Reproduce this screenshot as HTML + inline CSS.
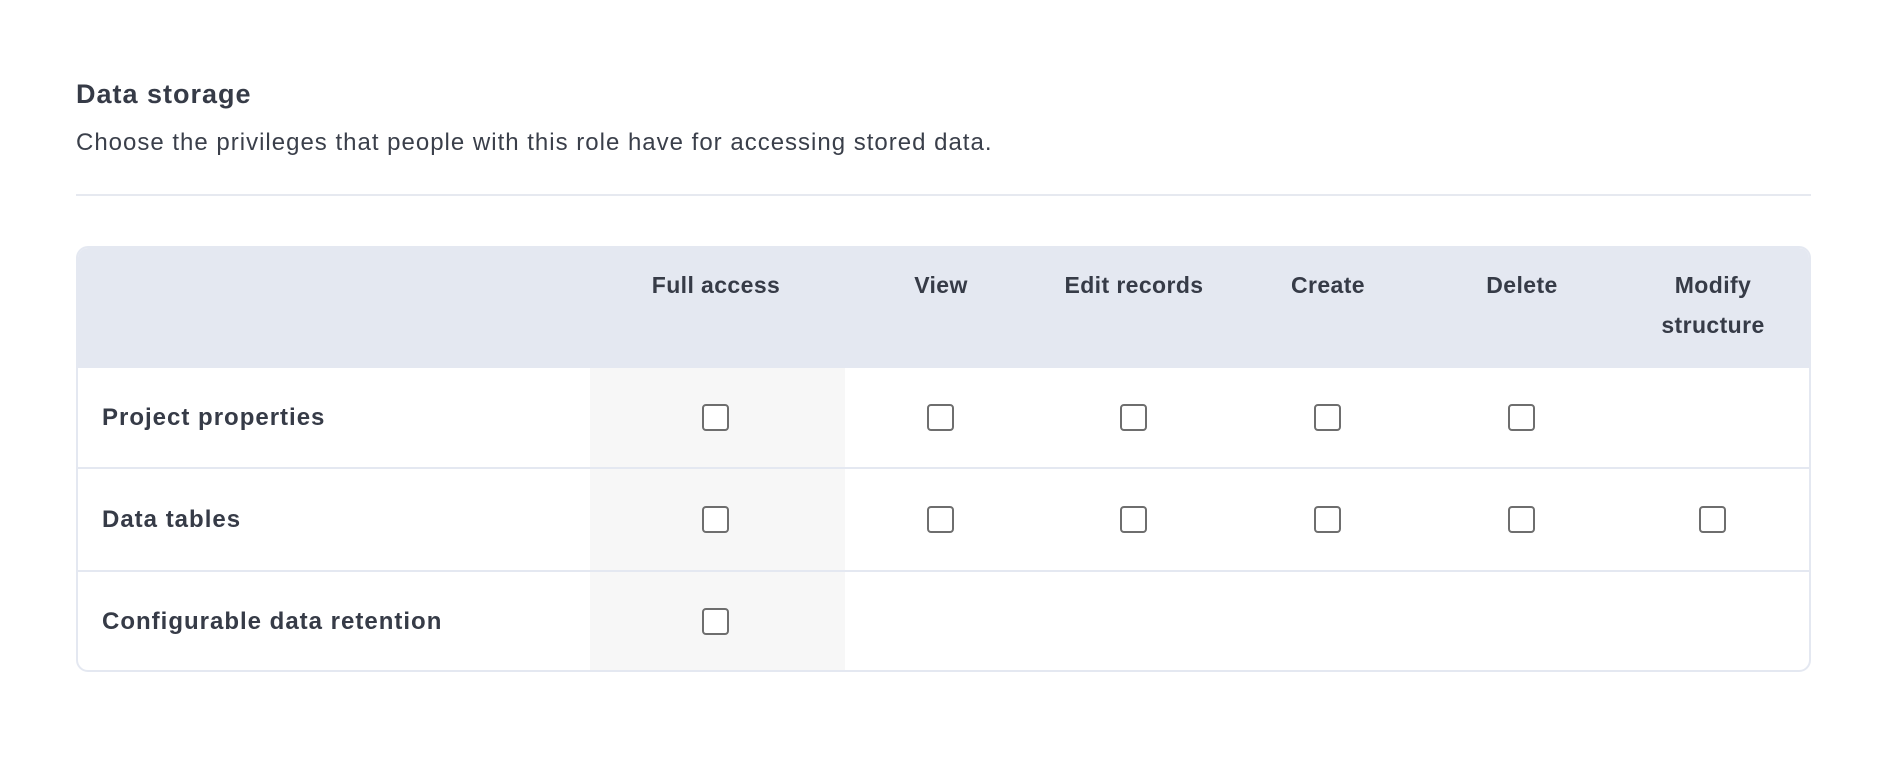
<!DOCTYPE html>
<html><head><meta charset="utf-8"><style>
*{margin:0;padding:0;box-sizing:border-box}
body{width:1889px;height:765px;background:#fff;font-family:"Liberation Sans",sans-serif;color:#363b47;position:relative;overflow:hidden}
.h{position:absolute;left:76px;top:79px;font-size:27px;font-weight:bold;letter-spacing:1px}
.s{position:absolute;left:76px;top:129px;font-size:24px;letter-spacing:1px;color:#3a3f4a}
.div{position:absolute;left:76px;top:194px;width:1735px;height:2px;background:#e6e9f0}
.tbl{position:absolute;left:76px;top:246px;width:1735px;height:426px;border:2px solid #e4e8f1;border-radius:12px;overflow:hidden}
.head{position:absolute;left:0;top:0;right:0;height:120px;background:#e4e8f1}
.shade{position:absolute;left:512px;top:120px;width:255px;height:310px;background:#f7f7f7}
.rl{position:absolute;left:0;right:0;height:2px;background:#e4e8f1}
.th{position:absolute;font-size:23px;font-weight:bold;text-align:center;width:200px;line-height:40px;letter-spacing:0.4px}
.lab{position:absolute;left:24px;font-size:24px;font-weight:bold;letter-spacing:1px}
.cb{position:absolute;width:27px;height:27px;border:2px solid #6e6e6e;border-radius:4px;background:#fff}
</style></head><body>
<div class="h">Data storage</div>
<div class="s">Choose the privileges that people with this role have for accessing stored data.</div>
<div class="div"></div>
<div class="tbl">
<div class="head"></div>
<div class="shade"></div>
<div class="rl" style="top:219px"></div>
<div class="rl" style="top:322px"></div>
<div class="th" style="left:538px;top:17px">Full access</div>
<div class="th" style="left:763px;top:17px">View</div>
<div class="th" style="left:956px;top:17px">Edit records</div>
<div class="th" style="left:1150px;top:17px">Create</div>
<div class="th" style="left:1344px;top:17px">Delete</div>
<div class="th" style="left:1535px;top:17px">Modify<br>structure</div>
<div class="lab" style="top:156px">Project properties</div>
<div class="lab" style="top:258px">Data tables</div>
<div class="lab" style="top:360px">Configurable data retention</div>

<div class="cb" style="left:624px;top:156px"></div>
<div class="cb" style="left:849px;top:156px"></div>
<div class="cb" style="left:1042px;top:156px"></div>
<div class="cb" style="left:1236px;top:156px"></div>
<div class="cb" style="left:1430px;top:156px"></div>

<div class="cb" style="left:624px;top:258px"></div>
<div class="cb" style="left:849px;top:258px"></div>
<div class="cb" style="left:1042px;top:258px"></div>
<div class="cb" style="left:1236px;top:258px"></div>
<div class="cb" style="left:1430px;top:258px"></div>
<div class="cb" style="left:1621px;top:258px"></div>

<div class="cb" style="left:624px;top:360px"></div>
</div>
</body></html>
